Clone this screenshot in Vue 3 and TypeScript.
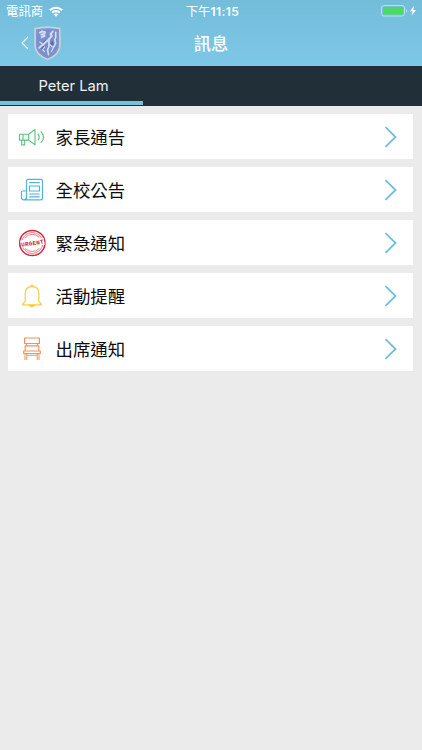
<script setup lang="ts">
import { ref } from 'vue'

type IconName = 'megaphone' | 'newspaper' | 'urgent' | 'bell' | 'chair'
interface MessageCategory {
  icon: IconName
  label: string
}

const categories: MessageCategory[] = [
  { icon: 'megaphone', label: '家長通告' },
  { icon: 'newspaper', label: '全校公告' },
  { icon: 'urgent', label: '緊急通知' },
  { icon: 'bell', label: '活動提醒' },
  { icon: 'chair', label: '出席通知' },
]
const students = ['Peter Lam']
const active = ref(0)
</script>

<template>
  <div class="screen">
    <header class="header">
      <div class="status">
        <div class="carrier">
          <span>電訊商</span>
          <svg class="wifi" width="14" height="11" viewBox="0 0 14 11">
            <g fill="none" stroke="#fff" stroke-width="2.1">
              <path d="M.9 4.2a8.700 8.700 0 0 1 12.200 0" />
              <path d="M3.200 6.700a5.400 5.400 0 0 1 7.600 0" />
            </g>
            <path d="M7 10.700 4.900 8.600a3 3 0 0 1 4.200 0z" fill="#fff" />
          </svg>
        </div>
        <div class="time">下午<b>11:15</b></div>
        <div class="power">
          <svg width="37" height="12" viewBox="0 0 37 12">
            <rect x="1.500" y=".5" width="23" height="10.500" rx="2.500" fill="none" stroke="#b8e1f1" />
            <rect x="3" y="2" width="20" height="7.500" rx="1.200" fill="#4cd964" />
            <path d="M26 4c1.600.6 1.600 3 0 3.600z" fill="#b8e1f1" />
            <path d="M34.100.8 30 6.300h2.600l-1.100 4.500L36 5h-2.700z" fill="#fff" />
          </svg>
        </div>
      </div>
      <div class="navbar">
        <div class="back">
          <svg width="8" height="14" viewBox="0 0 8 14">
            <path d="M7 1 1 7l6 6" fill="none" stroke="#fff" stroke-width="1.100" />
          </svg>
          <svg class="crest" width="27" height="35" viewBox="0 0 28 35">
            <path d="M1.200 2.100Q14-.6 26.800 2.100v17.200C26.800 27 20.500 31.500 14 34 7.500 31.500 1.200 27 1.200 19.300z" fill="#7a90cc" stroke="#cbd1dc" stroke-width="1.700" />
            <path d="M3 3.500Q14 1.200 25 3.500v15.800c0 6.700-5.500 10.600-11 12.800C8.500 29.900 3 26 3 19.300z" fill="none" stroke="#8e9cc9" stroke-width=".7" />
            <path d="m12 13-5 6 5-1zM10 18l-3 5 4 1zM19 14l-2 4 4 2z" fill="#5268ac" />
            <g fill="none" stroke="#d5def0" stroke-linecap="round" stroke-linejoin="round">
              <path d="M6 6.200 8.500 5l3 .7-1 2-3 .6M8 11l3-1.500" stroke-width="2" />
              <path d="M19.500 5 17 8l1.500 1.500-3.500 4-5 4.500-4.500 4" stroke-width="2" />
              <path d="M22.500 6v5l-1 3 1 3-2 4M15.500 14v7l-1.500 3 1 5" stroke-width="1.700" />
              <path d="m6 16 4 3M11 21l-2 3 2 2M17 19l3 3-2 4" stroke-width="1.200" />
            </g>
          </svg>
        </div>
        <h1>訊息</h1>
      </div>
    </header>

    <nav class="tabs">
      <button
        v-for="(student, i) in students"
        :key="student"
        class="tab"
        :class="{ active: active === i }"
        @click="active = i"
      >
        {{ student }}
      </button>
    </nav>

    <main class="list">
      <div v-for="item in categories" :key="item.label" class="row">
        <svg class="icon" width="30" height="30" viewBox="0 0 30 30">
          <g v-if="item.icon === 'megaphone'" fill="none" stroke="#5cc47f" stroke-width="1.150" stroke-linejoin="round">
            <path d="M2.500 12.200h9.200v5.900H2.500zM6 12.200v5.900M11.700 12.200l6.300-4.700v15.300l-6.300-4.700M4.700 18.100v4.700h3v-4.700" />
            <path d="M20.800 11.900q2.800 3.200 0 6.500M23.700 9.400q5.800 5.700 0 11.500" />
          </g>
          <g v-else-if="item.icon === 'newspaper'" fill="none" stroke="#51b4e3" stroke-width="1.200" stroke-linejoin="round">
            <path d="M9.500 24.500V6q0-1.700 1.700-1.700h12.600q1.700 0 1.700 1.700v17q0 1.900-2 1.900H7q-2.500 0-2.500-2.500V17q0-1 1-1h4M9.500 22q0 2.900-2.500 2.900" />
            <path d="M12.500 11h10v5h-10zM12.300 7.700h10.400M12.300 19h10.400M12.300 21.900h10.400" />
          </g>
          <g v-else-if="item.icon === 'urgent'" fill="none" stroke="#cc2638">
            <circle cx="15.300" cy="15" r="12.600" stroke-width="1.500" />
            <circle cx="15.300" cy="15" r="10.500" stroke-width=".6" />
            <path d="M7.800 10q7-7 14.700-.7M8 20.500q7.500 6 14.500 0" stroke-width=".6" />
            <path d="M3.200 12.500 26.500 9.700l1.300 7-23.300 3z" fill="#fff" stroke="none" />
            <text x="15.400" y="17.200" transform="rotate(-8 15.400 15)" text-anchor="middle" textLength="22.500" class="stamp">URGENT</text>
          </g>
          <g v-else-if="item.icon === 'bell'" fill="none" stroke="#f7cd4b" stroke-width="1.200" stroke-linejoin="round">
            <path d="M13.500 5.500q0-1.500 1.500-1.500t1.500 1.500M8.200 20v-7.500C8.200 8.500 10.500 5.700 15 5.700s6.800 2.800 6.800 6.800V20q0 1 2 2.200.8.500.8 1.600H5.400q0-1.100.8-1.600 2-1.200 2-2.200z" />
            <path d="M12.500 24q.2 1.800 2.500 1.800t2.500-1.800z" fill="#f7cd4b" />
          </g>
          <g v-else fill="none" stroke="#f0935a" stroke-width="1.200" stroke-linejoin="round">
            <path d="M7.600 4h14.800v5.500H7.600zM9.500 9.500v2.300M20.500 9.500v2.300M8.200 11.800h13.600v5.200H8.200zM6.700 17h16.600v2.500H6.700z" />
            <path d="M8 19.500v6.500M9.800 19.500v6.500M20.200 19.500v6.500M22 19.500v6.500M10 21.300h10" stroke-width="1" />
          </g>
        </svg>
        <span class="label">{{ item.label }}</span>
        <svg class="chevron" width="14" height="22" viewBox="0 0 14 22">
          <path d="m1.500 1.200 10 9.800-10 9.800" fill="none" stroke="#71bddd" stroke-width="1.800" />
        </svg>
      </div>
    </main>
  </div>
</template>

<style>
body {
  margin: 0;
  background: #ebebeb;
}
</style>

<style scoped>
.screen {
  min-height: 750px;
  background: #ebebeb;
  font-family: Inter, "Noto Sans CJK TC", sans-serif;
}
.header {
  height: 66px;
  box-sizing: border-box;
  background: linear-gradient(#73bddb, #7dc8e6);
  color: #fff;
}
.status,
.navbar {
  display: grid;
  grid-template-columns: 1fr auto 1fr;
  align-items: center;
}
.status {
  height: 22px;
  padding: 0 5px 0 6px;
  font-size: 12.400px;
  line-height: 22px;
}
.carrier {
  display: flex;
  align-items: center;
  gap: 6px;
}
.carrier span,
.time {
  padding-top: 1px;
  line-height: 21px;
}
.time {
  padding-left: 2px;
}
.time b {
  font-weight: 600;
  font-size: 12px;
  letter-spacing: 0.45px;
}
.power {
  display: flex;
  justify-content: flex-end;
}
.navbar {
  height: 42px;
  padding: 0 21px;
}
.back {
  display: flex;
  align-items: center;
  gap: 5px;
}
h1 {
  margin: 0;
  padding-top: 2px;
  font-size: 17.200px;
  font-weight: 500;
  line-height: 40px;
}
.tabs {
  display: flex;
  height: 40px;
  background: #212f39;
}
.tab {
  width: 143px;
  height: 39px;
  padding: 5px 0 0 4px;
  border: 0;
  border-bottom: 4px solid transparent;
  background: none;
  color: #eef1f3;
  font: 14.700px Inter, sans-serif;
}
.tab.active {
  border-bottom-color: #74c0e0;
}
.list {
  display: grid;
  gap: 8px;
  padding: 8px 9px 8px 8px;
}
.row {
  display: flex;
  align-items: center;
  height: 45px;
  box-sizing: border-box;
  padding: 0 15px 0 9px;
  background: #fff;
}
.label {
  flex: 1;
  margin-left: 8.500px;
  padding-top: 1px;
  color: #0c0c0c;
  font-size: 17.400px;
  line-height: 45px;
}
.stamp {
  fill: #cc2638;
  stroke: none;
  font: bold 6px "Liberation Mono", monospace;
}
</style>
